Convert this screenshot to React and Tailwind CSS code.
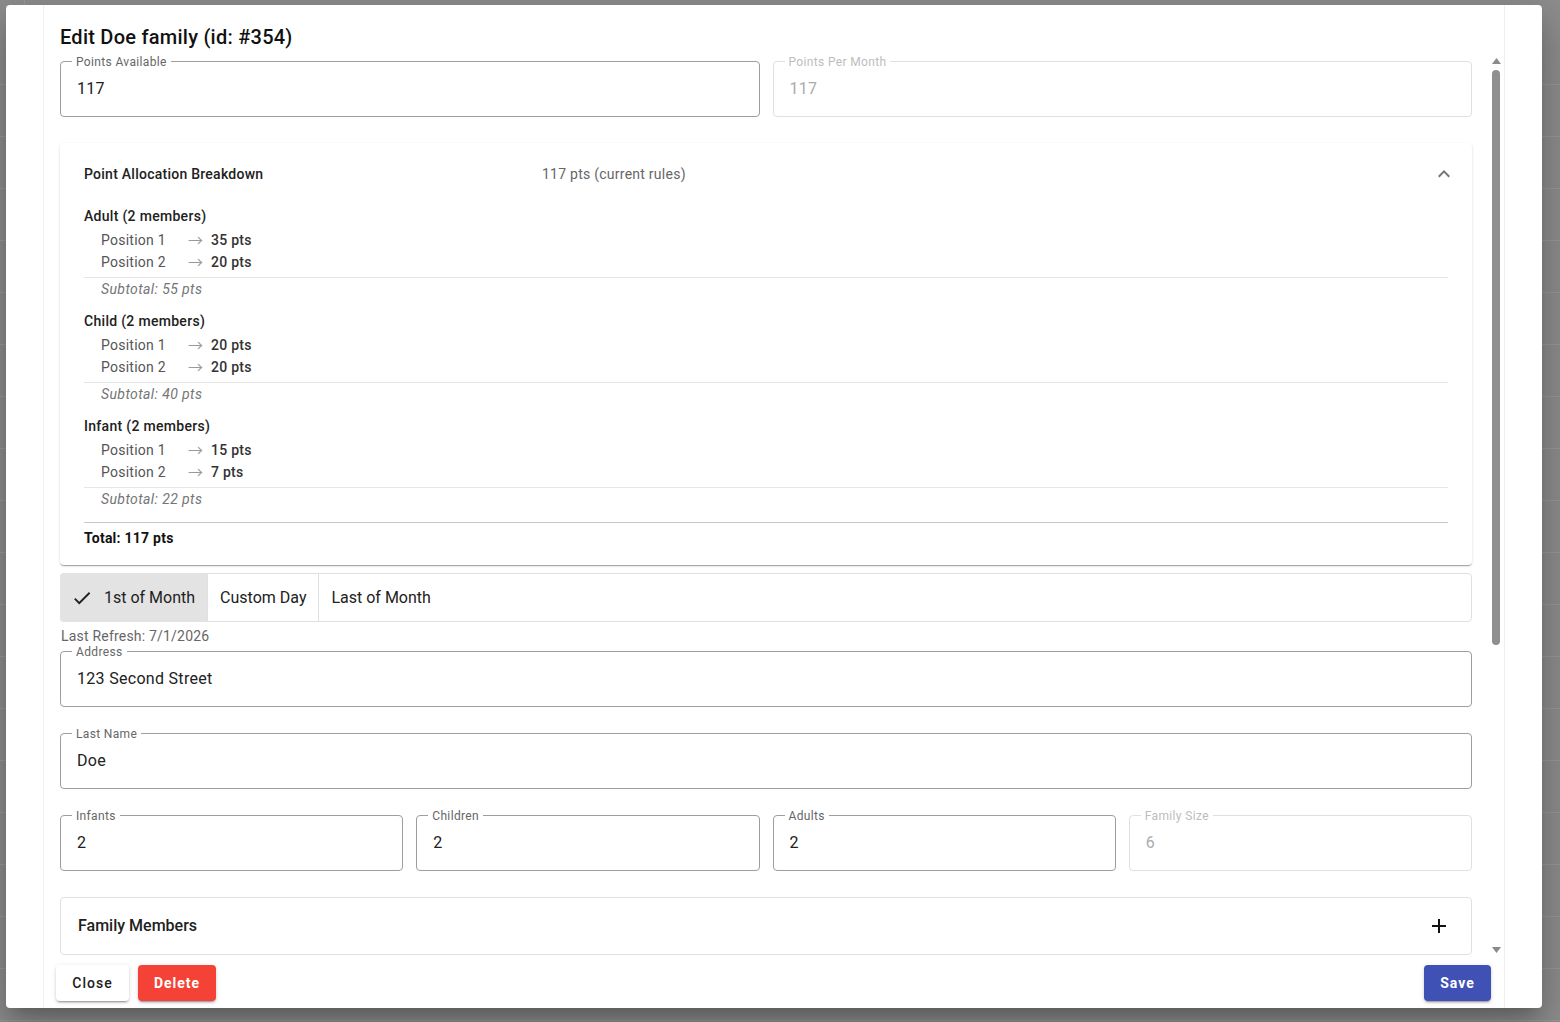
import React from "react";

const groups = [
  { name: "Adult (2 members)", rows: [["Position 1", "35 pts"], ["Position 2", "20 pts"]], subtotal: "Subtotal: 55 pts" },
  { name: "Child (2 members)", rows: [["Position 1", "20 pts"], ["Position 2", "20 pts"]], subtotal: "Subtotal: 40 pts" },
  { name: "Infant (2 members)", rows: [["Position 1", "15 pts"], ["Position 2", "7 pts"]], subtotal: "Subtotal: 22 pts" },
];

// outlined text field, notch done with fieldset/legend
const OutlinedField = ({ label, value, disabled }) => (
  <fieldset
    className={`min-w-0 rounded border px-[11px] ${
      disabled ? "border-[#e0e0e0]" : "border-[#9e9e9e]"
    }`}
  >
    <legend
      className={`px-1 text-xs leading-3 tracking-[0.35px] ${
        disabled ? "text-[#bdbdbd]" : "text-[#666]"
      }`}
    >
      <span className="relative top-px">{label}</span>
    </legend>
    <div
      className={`pl-[5px] pt-[10px] pb-[15px] text-base leading-6 tracking-[0.3px] ${
        disabled ? "text-[#ababab]" : "text-[#212121]"
      }`}
    >
      {value}
    </div>
  </fieldset>
);

const Breakdown = () => (
  <div className="mt-[26px] rounded bg-white shadow-[0_2px_1px_-1px_rgba(0,0,0,0.2),0_1px_1px_0_rgba(0,0,0,0.14),0_1px_3px_0_rgba(0,0,0,0.12)]">
    <div className="flex h-[62px] items-center pl-6 pr-4 text-sm tracking-[0.25px]">
      <span className="w-[458px] font-medium text-[#212121]">Point Allocation Breakdown</span>
      <span className="flex-1 text-[#666]">117 pts (current rules)</span>
      <svg viewBox="0 0 24 24" className="h-6 w-6 fill-[#757575]">
        <path d="M12 8l-6 6 1.41 1.41L12 10.83l4.59 4.58L18 14z" />
      </svg>
    </div>
    <div className="px-6 pt-px pb-[17px] text-sm tracking-[0.25px]">
      {groups.map((g, i) => (
        <div key={g.name} className={i > 0 ? "mt-3" : ""}>
          <div className="font-medium leading-5 tracking-[0.3px] text-[#212121]">{g.name}</div>
          <div className="mt-[3px]">
            {g.rows.map(([pos, pts]) => (
              <div key={pos} className="flex pl-[17px] leading-[22px]">
                <span className="w-[87px] text-[#555]">{pos}</span>
                <span className="w-[23px] font-['Noto_Sans_CJK_JP',sans-serif] text-[15px] text-[#9a9a9a]">→</span>
                <span className="font-medium text-[#333]">{pts}</span>
              </div>
            ))}
          </div>
          <div className="mt-1 h-px bg-[#e6e6e6]" />
          <div className="mt-px pl-[17px] italic leading-5 tracking-[0.4px] text-[#757575]">{g.subtotal}</div>
        </div>
      ))}
      <div className="mt-[13px] h-px bg-[#c8c8c8]" />
      <div className="mt-[5px] font-bold leading-5 text-[#111]">Total: 117 pts</div>
    </div>
  </div>
);

const RefreshToggle = () => (
  <div className="mt-2 flex h-[49px] rounded border border-[#e0e0e0] text-base text-[#212121]">
    <div className="-my-px -ml-px flex items-center gap-[11px] rounded-l bg-[#e3e3e3] pl-[11px] pr-3">
      <svg viewBox="0 0 24 24" className="h-[22px] w-[22px] fill-[#212121]">
        <path d="M9 16.17 4.83 12l-1.42 1.41L9 19 21 7l-1.41-1.41z" />
      </svg>
      1st of Month
    </div>
    <div className="flex items-center border-x border-[#e0e0e0] px-3">Custom Day</div>
    <div className="flex items-center px-3">Last of Month</div>
  </div>
);

const FakeScrollbar = () => (
  <div className="flex w-4 flex-col items-center pt-[3px] pb-[2px]">
    <svg width="9" height="6" viewBox="0 0 9 6" className="fill-[#8a8a8a]">
      <path d="M4.5 0L9 6H0z" />
    </svg>
    <div className="mt-[6px] h-[575px] w-2 rounded-full bg-[#8f8f8f]" />
    <div className="flex-1" />
    <svg width="9" height="6" viewBox="0 0 9 6" className="fill-[#8a8a8a]">
      <path d="M0 0h9L4.5 6z" />
    </svg>
  </div>
);

const App = () => {
  return (
    <div className="relative h-[1022px] w-full overflow-hidden bg-[#8e8e8e] font-['Roboto','Liberation_Sans',sans-serif]">
      {/* table rows behind the backdrop */}
      <div className="flex h-[85px] border-b border-[#9a9a9a]">
        <div className="w-[25px] border-r border-[#9a9a9a]" />
      </div>
      {Array.from({ length: 18 }).map((_, i) => (
        <div key={i} className="h-[52px] border-b border-[#9a9a9a]" />
      ))}

      <div className="absolute inset-0 pl-[6px] pt-[5px]">
        <div className="h-[1003px] w-[1536px] rounded bg-white shadow-[0_11px_15px_-7px_rgba(0,0,0,0.2),0_24px_38px_3px_rgba(0,0,0,0.14),0_9px_46px_8px_rgba(0,0,0,0.12)]">
          <div className="ml-[37px] flex h-full w-[1462px] flex-col border-x border-[#efefef]">
            <h2 className="pl-4 pt-4 pb-[2px] text-xl font-medium leading-8 tracking-[0.25px] text-[#111]">
              Edit Doe family (id: #354)
            </h2>

            <div className="flex h-[900px]">
              <div className="min-w-0 flex-1 overflow-hidden px-4">
                <div className="grid grid-cols-2 gap-[13px]">
                  <OutlinedField label="Points Available" value="117" />
                  <OutlinedField label="Points Per Month" value="117" disabled />
                </div>

                <Breakdown />
                <RefreshToggle />

                <div className="mt-[6px] pl-px text-sm leading-4 tracking-[0.2px] text-[#666]">Last Refresh: 7/1/2026</div>
                <div className="mt-px">
                  <OutlinedField label="Address" value="123 Second Street" />
                </div>
                <div className="mt-5">
                  <OutlinedField label="Last Name" value="Doe" />
                </div>
                <div className="mt-5 grid grid-cols-4 gap-[13px]">
                  <OutlinedField label="Infants" value="2" />
                  <OutlinedField label="Children" value="2" />
                  <OutlinedField label="Adults" value="2" />
                  <OutlinedField label="Family Size" value="6" disabled />
                </div>

                <div className="mt-[26px] flex h-[58px] items-center justify-between rounded border border-[#e0e0e0] pl-[17px] pr-[20px]">
                  <span className="text-base font-medium text-[#212121]">Family Members</span>
                  <svg viewBox="0 0 24 24" className="h-6 w-6 fill-[#111]">
                    <path d="M19 13h-6v6h-2v-6H5v-2h6V5h2v6h6v2z" />
                  </svg>
                </div>
                <div className="h-40" />
              </div>
              <FakeScrollbar />
            </div>

            <div className="flex items-start justify-between pl-3 pr-[13px] pt-[10px]">
              <div className="flex gap-[9px]">
                <button className="h-9 w-[73px] rounded bg-white text-sm font-medium tracking-[0.07em] text-[#212121] shadow-[0_3px_1px_-2px_rgba(0,0,0,0.2),0_2px_2px_0_rgba(0,0,0,0.14),0_1px_5px_0_rgba(0,0,0,0.12)]">
                  Close
                </button>
                <button className="h-9 w-[78px] rounded bg-[#f44336] text-sm font-bold tracking-[0.07em] text-white shadow-[0_3px_1px_-2px_rgba(0,0,0,0.2),0_2px_2px_0_rgba(0,0,0,0.14),0_1px_5px_0_rgba(0,0,0,0.12)]">
                  Delete
                </button>
              </div>
              <button className="h-9 w-[67px] rounded bg-[#3f51b5] text-sm font-bold tracking-[0.07em] text-white shadow-[0_3px_1px_-2px_rgba(0,0,0,0.2),0_2px_2px_0_rgba(0,0,0,0.14),0_1px_5px_0_rgba(0,0,0,0.12)]">
                Save
              </button>
            </div>
          </div>
        </div>
      </div>
    </div>
  );
};

export default App;
